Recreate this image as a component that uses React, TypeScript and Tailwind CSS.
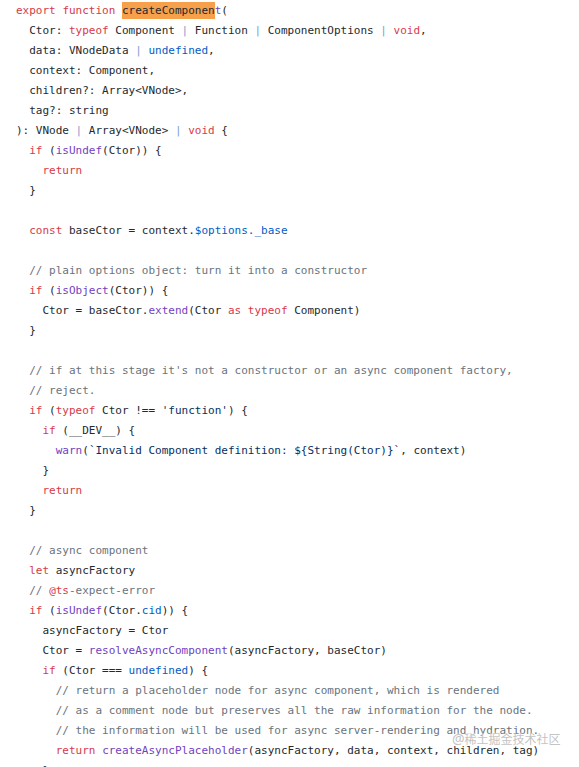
import React from "react";

type Seg = [string, string];

const C: Record<string, string> = {
  t: "text-[#24292e]",
  k: "text-[#d73a49]",
  f: "text-[#6f42c1]",
  c: "text-[#005cc5]",
  m: "text-[#6a737d]",
  s: "text-[#032f62]",
  p: "text-[#7f9ccf]",
  h: "text-[#24292e] bg-[#f6a04c] py-[2px]",
};

const t = (s: string): Seg => ["t", s];
const k = (s: string): Seg => ["k", s];
const f = (s: string): Seg => ["f", s];
const c = (s: string): Seg => ["c", s];
const m = (s: string): Seg => ["m", s];
const s_ = (s: string): Seg => ["s", s];
const p = (s: string): Seg => ["p", s];
const h = (s: string): Seg => ["h", s];

const lines: Seg[][] = [
  [k("export"), t(" "), k("function"), t(" "), h("createComponen"), f("t"), t("(")],
  [t("  Ctor: "), k("typeof"), t(" Component "), p("|"), t(" Function "), p("|"), t(" ComponentOptions "), p("|"), t(" "), k("void"), t(",")],
  [t("  data: VNodeData "), p("|"), t(" "), c("undefined"), t(",")],
  [t("  context: Component,")],
  [t("  children?: Array<VNode>,")],
  [t("  tag?: string")],
  [t("): VNode "), p("|"), t(" Array<VNode> "), p("|"), t(" "), k("void"), t(" {")],
  [t("  "), k("if"), t(" ("), f("isUndef"), t("(Ctor)) {")],
  [t("    "), k("return")],
  [t("  }")],
  [],
  [t("  "), k("const"), t(" baseCtor = context."), c("$options._base")],
  [],
  [t("  "), m("// plain options object: turn it into a constructor")],
  [t("  "), k("if"), t(" ("), f("isObject"), t("(Ctor)) {")],
  [t("    Ctor = baseCtor."), f("extend"), t("(Ctor "), k("as"), t(" "), k("typeof"), t(" Component)")],
  [t("  }")],
  [],
  [t("  "), m("// if at this stage it's not a constructor or an async component factory,")],
  [t("  "), m("// reject.")],
  [t("  "), k("if"), t(" ("), k("typeof"), t(" Ctor !== "), s_("'function'"), t(") {")],
  [t("    "), k("if"), t(" (__DEV__) {")],
  [t("      "), f("warn"), t("("), s_("`Invalid Component definition: ${String(Ctor)}`"), t(", context)")],
  [t("    }")],
  [t("    "), k("return")],
  [t("  }")],
  [],
  [t("  "), m("// async component")],
  [t("  "), k("let"), t(" asyncFactory")],
  [t("  "), m("// "), k("@ts"), m("-expect-error")],
  [t("  "), k("if"), t(" ("), f("isUndef"), t("(Ctor."), c("cid"), t(")) {")],
  [t("    asyncFactory = Ctor")],
  [t("    Ctor = "), f("resolveAsyncComponent"), t("(asyncFactory, baseCtor)")],
  [t("    "), k("if"), t(" (Ctor === "), c("undefined"), t(") {")],
  [t("      "), m("// return a placeholder node for async component, which is rendered")],
  [t("      "), m("// as a comment node but preserves all the raw information for the node.")],
  [t("      "), m("// the information will be used for async server-rendering and hydration.")],
  [t("      "), k("return"), t(" "), f("createAsyncPlaceholder"), t("(asyncFactory, data, context, children, tag)")],
  [t("    }")],
  [t("  }")],
];

export default function App() {
  return (
    <div className="relative h-[767px] w-[579px] overflow-hidden bg-white">
      <div
        className="pl-4 pt-px text-[11px] leading-5 whitespace-pre text-[#24292e]"
        style={{ fontFamily: '"DejaVu Sans Mono", "Liberation Mono", monospace' }}
      >
        {lines.map((line, i) => (
          <div key={i} className="h-5">
            {line.length === 0 ? " " : line.map(([cls, txt], j) => (
              <span key={j} className={C[cls]}>
                {txt}
              </span>
            ))}
          </div>
        ))}
      </div>
      <div
        className="absolute left-[452px] top-[731px] text-[12px] leading-4 text-[#c4c4c4] [text-shadow:0_0_2px_#ffffff]"
        style={{ fontFamily: '"Noto Sans CJK SC", "Noto Sans", sans-serif' }}
      >
        <span className="text-[14px]" style={{ fontFamily: '"Noto Sans", sans-serif' }}>@</span>稀土掘金技术社区
      </div>
    </div>
  );
}
